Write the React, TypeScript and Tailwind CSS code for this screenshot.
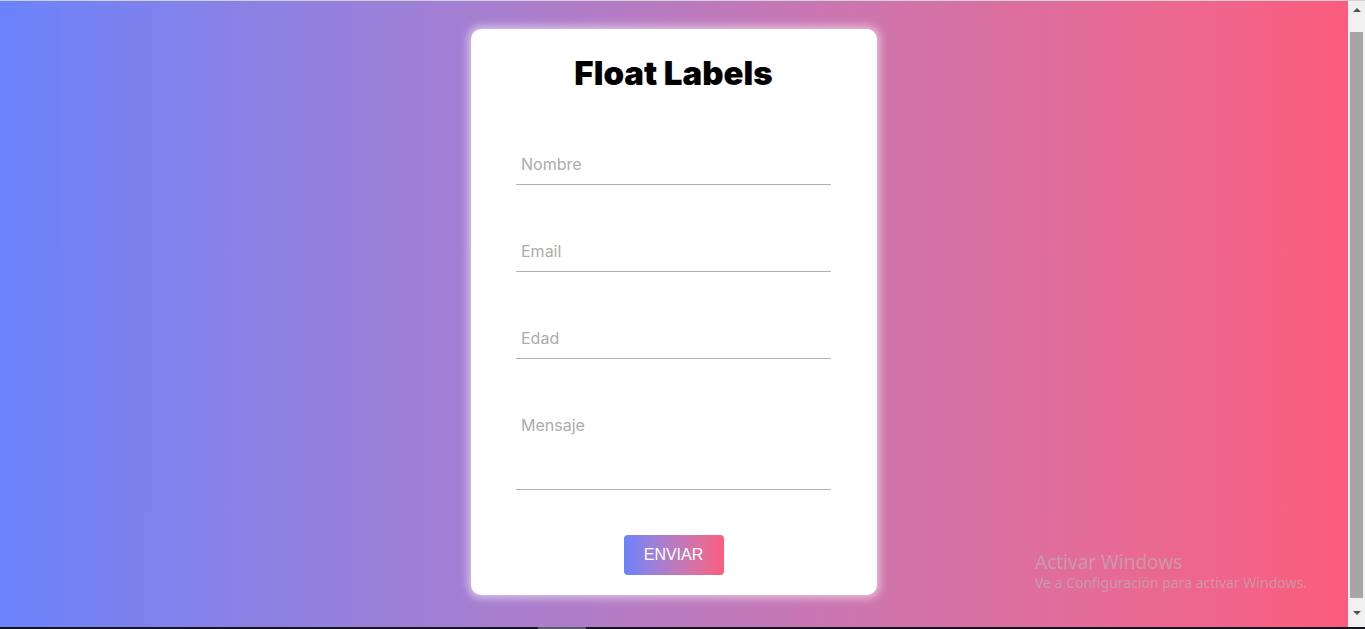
function Field({ label, area }: { label: string; area?: boolean }) {
  if (area) {
    return (
      <textarea
        placeholder={label}
        className="w-full h-[85px] resize-none border-b border-[#b0b0b0] bg-transparent pl-[5px] pt-[8px] text-[16px] leading-6 outline-none placeholder:text-[#acacac]"
        style={{ fontFamily: "Inter, 'Noto Sans', sans-serif" }}
      />
    )
  }
  return (
    <input
      placeholder={label}
      className="w-full h-[41px] border-b border-[#b0b0b0] bg-transparent pl-[5px] text-[16px] outline-none placeholder:text-[#acacac]"
      style={{ fontFamily: "Inter, 'Noto Sans', sans-serif" }}
    />
  )
}

export default function App() {
  return (
    <div className="w-[1365px] h-[629px] flex flex-col overflow-hidden">
      {/* browser top edge */}
      <div className="h-px bg-[#cfcfd6]" />

      <div className="flex flex-1 min-h-0">
        {/* page */}
        <main className="relative flex-1 bg-gradient-to-r from-[#6a82fb] to-[#fc5c7d] flex justify-center">
          <form className="mt-[28px] w-[406px] h-[566px] bg-white rounded-[10px] shadow-[0_0_8px_3px_rgba(255,255,255,0.55)] flex flex-col items-center pl-[45px] pr-[46px] pt-[20px]">
            <h1
              className="text-[33px] leading-[48px] font-black text-black"
              style={{ fontFamily: "Inter, 'Open Sans', sans-serif" }}
            >
              Float Labels
            </h1>

            <div className="w-full mt-[47px] flex flex-col gap-[46px]">
              <Field label="Nombre" />
              <Field label="Email" />
              <Field label="Edad" />
              <Field label="Mensaje" area />
            </div>

            <button
              type="button"
              className="mt-[45px] w-[100px] h-[40px] rounded bg-gradient-to-r from-[#6a82fb] to-[#fc5c7d] text-white text-[16px]"
              style={{ fontFamily: "'Liberation Sans', Arial, sans-serif" }}
            >
              ENVIAR
            </button>
          </form>

          {/* windows activation watermark */}
          <div
            className="absolute left-[1035px] top-[548px] text-[#b8b8b8]/60 pointer-events-none"
            style={{ fontFamily: "'Noto Sans', 'Open Sans', sans-serif" }}
          >
            <p className="text-[19px] leading-[26px]">Activar Windows</p>
            <p className="text-[14px] leading-[18px] mt-[-1px]">Ve a Configuración para activar Windows.</p>
          </div>
        </main>

        {/* scrollbar */}
        <div className="w-[17px] bg-[#f0f0f0] flex flex-col items-center">
          <div className="h-[17px] flex items-center justify-center">
            <div className="w-0 h-0 border-l-[4px] border-r-[4px] border-b-[4px] border-l-transparent border-r-transparent border-b-[#505050]" />
          </div>
          <div className="mt-[14px] w-[13px] h-[566px] bg-[#a6a6a6]" />
          <div className="flex-1 flex items-center justify-center">
            <div className="w-0 h-0 border-l-[4px] border-r-[4px] border-t-[4px] border-l-transparent border-r-transparent border-t-[#505050]" />
          </div>
        </div>
      </div>

      {/* taskbar edge */}
      <div className="h-[2px] bg-[#161420] flex">
        <div className="ml-[538px] w-[48px] bg-[#5a5a64]" />
      </div>
    </div>
  )
}
